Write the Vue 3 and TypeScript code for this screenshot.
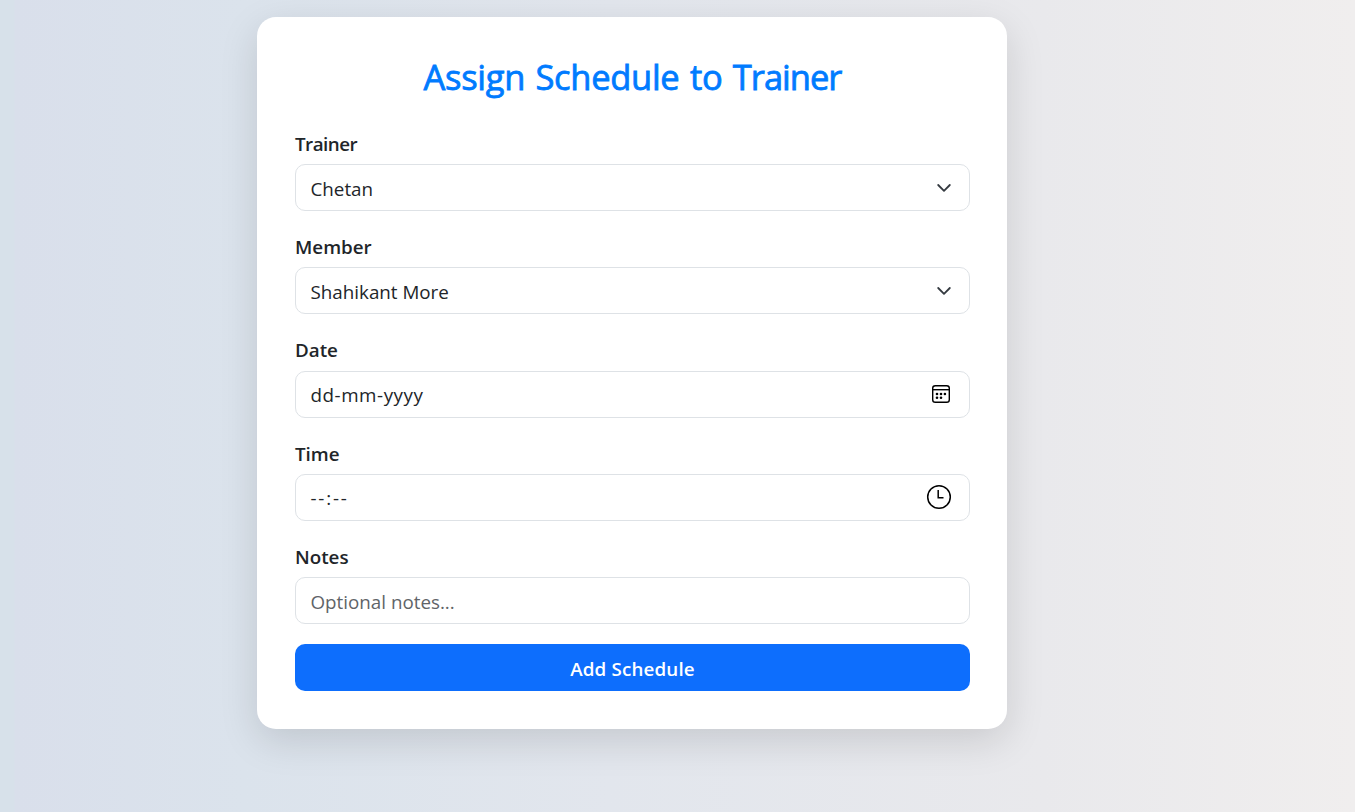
<script setup lang="ts">
type Icon = 'chevron' | 'calendar' | 'clock' | 'none'

interface Field {
  id: string
  label: string
  value: string
  icon: Icon
  muted?: boolean
}

const fields: Field[] = [
  { id: 'trainer', label: 'Trainer', value: 'Chetan', icon: 'chevron' },
  { id: 'member', label: 'Member', value: 'Shahikant More', icon: 'chevron' },
  { id: 'date', label: 'Date', value: 'dd-mm-yyyy', icon: 'calendar' },
  { id: 'time', label: 'Time', value: '--:--', icon: 'clock' },
  { id: 'notes', label: 'Notes', value: 'Optional notes...', icon: 'none', muted: true },
]
</script>

<template>
  <main class="page">
    <form class="card" @submit.prevent>
      <h2 class="title">Assign Schedule to <span class="title-end">Trainer</span></h2>
      <div v-for="field in fields" :key="field.id" class="field">
        <div class="label"><span :class="`label-${field.id}`">{{ field.label }}</span></div>
        <div class="control" tabindex="0">
          <span :class="['value', `value-${field.id}`, { muted: field.muted }]">{{ field.value }}</span>
          <svg v-if="field.icon === 'chevron'" class="chevron" viewBox="0 0 16 16" aria-hidden="true">
            <path d="m2.2 5 5.8 5.8L13.8 5" />
          </svg>
          <svg v-else-if="field.icon === 'calendar'" class="calendar" viewBox="0 0 20 20" aria-hidden="true">
            <rect x="1.7" y="1.7" width="16.6" height="16.6" rx="2.6" />
            <path d="M1.7 5.7h16.6" />
            <g class="dots">
              <circle cx="6" cy="10" r="1.3" />
              <circle cx="10" cy="10" r="1.3" />
              <circle cx="13.9" cy="10" r="1.3" />
              <circle cx="6" cy="13.8" r="1.3" />
              <circle cx="10" cy="13.8" r="1.3" />
            </g>
          </svg>
          <svg v-else-if="field.icon === 'clock'" class="clock" viewBox="0 0 26 26" aria-hidden="true">
            <circle cx="13" cy="13" r="11.3" />
            <path d="M12.2 6v7.7h5.3" />
          </svg>
        </div>
      </div>
      <button class="submit" type="submit"><span>Add Schedule</span></button>
    </form>
  </main>
</template>

<style>
body {
  margin: 0;
}
</style>

<style scoped>
.page {
  box-sizing: border-box;
  height: 812px;
  padding: 17px 0 0 257px;
  overflow: hidden;
  font-family: 'Segoe UI', 'Open Sans', 'Noto Sans', sans-serif;
  color: #212529;
  background: linear-gradient(to right, #d7e1ea 0 14px, #d9dfeb 15px, #dbe3ec 18%, #e2e6ed 45%, #e9e9ec 77%, #f0eeee 100%);
}
.card {
  box-sizing: border-box;
  width: 750px;
  height: 712px;
  padding: 37px 37px 38px 38px;
  border-radius: 19px;
  background: #fff;
  box-shadow: 0 12px 38px rgba(0, 0, 0, 0.13);
}
.title {
  margin: 0 0 29.9px;
  height: 45px;
  line-height: 45px;
  text-align: center;
  white-space: nowrap;
  font-size: 34.5px;
  font-weight: 500;
  letter-spacing: -0.3px;
  word-spacing: 1.8px;
  -webkit-text-stroke: 0.8px #007bff;
  color: #007bff;
}
.title-end {
  letter-spacing: -1px;
}
.field {
  height: 103.25px;
}
.label {
  height: 35.2px;
  line-height: 30px;
  font-size: 18.8px;
  font-weight: 600;
}
.label-trainer {
  letter-spacing: -0.5px;
}
.control {
  box-sizing: border-box;
  display: flex;
  align-items: center;
  justify-content: space-between;
  height: 47px;
  padding: 0 17px 0 14.5px;
  border: 1px solid #dee2e6;
  border-radius: 10px;
  outline: none;
  background: #fff;
  font-size: 18.8px;
}
.value {
  padding-top: 2px;
  line-height: 28px;
  white-space: pre;
}
.value-date {
  letter-spacing: 0.55px;
}
.value-time {
  letter-spacing: 1.8px;
}
.muted {
  color: #5f6468;
}
svg {
  flex: none;
  fill: none;
  stroke: #000;
}
.chevron {
  width: 16px;
  height: 16px;
  stroke: #343a40;
  stroke-width: 1.8;
  stroke-linecap: round;
  stroke-linejoin: round;
}
.calendar {
  width: 20px;
  height: 20px;
  margin-right: 1px;
  stroke-width: 1.4;
}
.dots {
  fill: #000;
  stroke: none;
}
.clock {
  width: 26px;
  height: 26px;
  stroke-width: 1.5;
}
.submit {
  display: block;
  width: 100%;
  height: 47px;
  margin-top: -1.15px;
  padding: 2px 0 0;
  border: 0;
  border-radius: 10px;
  background: #0d6efd;
  color: #fff;
  font: inherit;
  font-size: 18.8px;
  font-weight: 600;
  letter-spacing: 0.15px;
}
</style>
